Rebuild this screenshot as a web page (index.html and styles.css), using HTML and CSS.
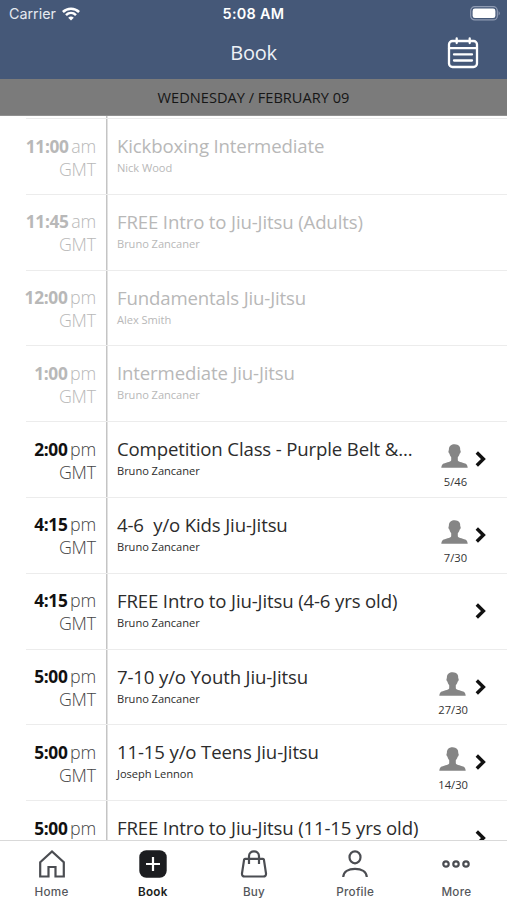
FILE: index.html
```html
<!DOCTYPE html>
<html lang="en">
<head>
<meta charset="utf-8">
<title>Book</title>
<link rel="stylesheet" href="styles.css">
</head>
<body>
<svg width="0" height="0" class="defs" aria-hidden="true">
  <symbol id="person" viewBox="0 0 27 24"><path d="M13.8 0.2C9.8 0 7.6 2.5 7.9 6.2C7 6.6 7.5 9 8.5 9.7C8.9 11.4 9.5 12.4 10.2 13.2V16.2C9.8 18 3.6 18.7 1.9 20C.8 20.9.4 22.4.3 23.7H26.7C26.6 22.4 26.2 20.9 25.1 20C23.4 18.7 17.2 18 16.8 16.2V13.2C17.6 12.4 18.2 11.4 18.6 9.7C19.8 9 20.1 6.6 19.2 6.2C19.6 2.7 17.7.4 13.8.2Z"/></symbol>
  <symbol id="chevron" viewBox="0 0 11 16"><path d="M1.8 1.5L8.4 8L1.8 14.5" fill="none" stroke="#111" stroke-width="3.4"/></symbol>
</svg>
<div class="app">
  <header class="header">
    <div class="status">
      <div class="carrier"><span>Carrier</span>
        <svg width="18" height="14" viewBox="0 0 18 14" fill="none" stroke="#fff" stroke-width="2.5"><path d="M.9 5C5.4.5 12.6.5 17.1 5"/><path d="M4 8.2C6.9 5.4 11.1 5.4 14 8.2"/><path d="M6.2 10.7Q9 8.2 11.8 10.7L9 13.6Z" fill="#fff" stroke="none"/></svg>
      </div>
      <div class="clock">5:08 AM</div>
      <svg class="battery" width="31" height="15" viewBox="0 0 31 15"><rect x=".7" y=".7" width="26.6" height="13.2" rx="4" fill="none" stroke="#8f9bb3" stroke-width="1.2"/><rect x="2.6" y="2.6" width="22.8" height="9.4" rx="2.3" fill="#fff"/><path d="M28.6 5Q31 7.3 28.6 9.6Z" fill="#8f9bb3"/></svg>
    </div>
    <div class="titlebar">
      <h1>Book</h1>
      <svg class="calendar" width="32" height="32" viewBox="0 0 32 32" fill="none" stroke="#fff" stroke-width="2.3" stroke-linecap="round"><rect x="2" y="4" width="28" height="26" rx="3.5"/><path d="M2 11.2H30M9.7 1.5V6M22.7 1.5V6M7 17.4H25M7 23.5H25"/></svg>
    </div>
  </header>
  <div class="date">WEDNESDAY / FEBRUARY 09</div>
  <main class="list">
    <article class="row past"><div class="time"><b>11:00</b> am<br>GMT</div><div class="info"><h2>Kickboxing Intermediate</h2><p>Nick Wood</p></div></article>
    <article class="row past"><div class="time"><b>11:45</b> am<br>GMT</div><div class="info"><h2>FREE Intro to Jiu-Jitsu (Adults)</h2><p>Bruno Zancaner</p></div></article>
    <article class="row past"><div class="time"><b>12:00</b> pm<br>GMT</div><div class="info"><h2>Fundamentals Jiu-Jitsu</h2><p>Alex Smith</p></div></article>
    <article class="row past"><div class="time"><b>1:00</b> pm<br>GMT</div><div class="info"><h2>Intermediate Jiu-Jitsu</h2><p>Bruno Zancaner</p></div></article>
    <article class="row"><div class="time"><b>2:00</b> pm<br>GMT</div><div class="info"><h2>Competition Class - Purple Belt &amp;...</h2><p>Bruno Zancaner</p></div><div class="spots"><svg width="27" height="24"><use href="#person"/></svg><span>5/46</span></div><svg class="chev" width="11" height="16"><use href="#chevron"/></svg></article>
    <article class="row"><div class="time"><b>4:15</b> pm<br>GMT</div><div class="info"><h2>4-6  y/o Kids Jiu-Jitsu</h2><p>Bruno Zancaner</p></div><div class="spots"><svg width="27" height="24"><use href="#person"/></svg><span>7/30</span></div><svg class="chev" width="11" height="16"><use href="#chevron"/></svg></article>
    <article class="row"><div class="time"><b>4:15</b> pm<br>GMT</div><div class="info"><h2>FREE Intro to Jiu-Jitsu (4-6 yrs old)</h2><p>Bruno Zancaner</p></div><svg class="chev" width="11" height="16"><use href="#chevron"/></svg></article>
    <article class="row"><div class="time"><b>5:00</b> pm<br>GMT</div><div class="info"><h2>7-10 y/o Youth Jiu-Jitsu</h2><p>Bruno Zancaner</p></div><div class="spots wide"><svg width="27" height="24"><use href="#person"/></svg><span>27/30</span></div><svg class="chev" width="11" height="16"><use href="#chevron"/></svg></article>
    <article class="row"><div class="time"><b>5:00</b> pm<br>GMT</div><div class="info"><h2>11-15 y/o Teens Jiu-Jitsu</h2><p>Joseph Lennon</p></div><div class="spots wide"><svg width="27" height="24"><use href="#person"/></svg><span>14/30</span></div><svg class="chev" width="11" height="16"><use href="#chevron"/></svg></article>
    <article class="row"><div class="time"><b>5:00</b> pm</div><div class="info"><h2>FREE Intro to Jiu-Jitsu (11-15 yrs old)</h2></div><svg class="chev" width="11" height="16"><use href="#chevron"/></svg></article>
  </main>
  <nav class="tabs">
    <a class="tab"><svg viewBox="0 0 28 28"><path d="M2.2 12.3L14 1.5L25.8 12.3V26.5H17.5V17H10.5V26.5H2.2Z"/></svg><span>Home</span></a>
    <a class="tab active"><svg viewBox="0 0 28 28"><rect x=".3" y=".3" width="27.4" height="27.4" rx="7" fill="#1c1d20" stroke="none"/><path d="M14 7V21M7 14H21" stroke="#fff"/></svg><span>Book</span></a>
    <a class="tab"><svg viewBox="0 0 28 28"><path d="M5 8.8H23Q23.7 8.8 23.9 9.6L26 23.3Q26.3 26.5 23.2 26.5H4.8Q1.7 26.5 2 23.3L4.1 9.6Q4.3 8.8 5 8.8ZM9 14V6.2C9 -.2 19 -.2 19 6.2V14"/></svg><span>Buy</span></a>
    <a class="tab"><svg viewBox="0 0 28 28"><ellipse cx="14" cy="7.3" rx="5.5" ry="6"/><path d="M2.2 27C2.5 21.5 7.5 18.8 14 18.8S25.5 21.5 25.8 27"/></svg><span>Profile</span></a>
    <a class="tab"><svg viewBox="0 0 28 28"><circle cx="4" cy="14" r="2.7"/><circle cx="14" cy="14" r="2.7"/><circle cx="24" cy="14" r="2.7"/></svg><span>More</span></a>
  </nav>
</div>
</body>
</html>
```
FILE: styles.css
```css
* { box-sizing: border-box; }
body { margin: 0; background: #fff; font-family: "Open Sans", "Noto Sans", sans-serif; color: #2c2c2c; }
h1, h2, p { margin: 0; font-weight: 400; }
svg { display: block; flex: none; }
.defs { position: absolute; }
.app { width: 507px; height: 900px; display: flex; flex-direction: column; overflow: hidden; }
.header { height: 79px; flex: none; background: #455878; color: #fff; }
.status { height: 27px; display: grid; grid-template-columns: 1fr auto 1fr; align-items: center; padding: 0 6px 0 9px; font-family: Inter, sans-serif; }
.carrier { display: flex; align-items: center; gap: 6px; font-size: 14.3px; color: #e6e9f0; }
.clock { font-size: 14.4px; font-weight: 600; letter-spacing: .3px; margin-right: 3px; }
.battery { justify-self: end; }
.titlebar { height: 52px; display: grid; grid-template-columns: 1fr auto 1fr; align-items: center; padding: 0 28px; }
.titlebar h1 { grid-column: 2; font-size: 20px; line-height: 52px; letter-spacing: -.3px; color: #eef1f6; }
.calendar { justify-self: end; }
.date { height: 37px; flex: none; background: #7b7b7b; border-bottom: 1px solid #909090; color: #161616; text-align: center; font-size: 14.6px; line-height: 37px; }
.list { flex: 1; min-height: 0; overflow: hidden; padding-top: 2px; background: linear-gradient(#c4c4c4, #c4c4c4) 106px 0 / 1.5px 100% no-repeat; }
.row { height: 75.8px; margin-left: 26px; padding-right: 21px; display: flex; border-top: 1.5px solid #ececec; }
.time { width: 74px; margin-left: -4px; margin-right: 21px; padding-top: 15.5px; text-align: right; white-space: nowrap; font-size: 17.8px; line-height: 23px; font-weight: 300; color: #444; flex: none; word-spacing: -2px; letter-spacing: -.15px; }
.time b { font-weight: 700; color: #111; font-size: 17.3px; letter-spacing: -.3px; }
.info { flex: 1; min-width: 0; padding-top: 13px; white-space: pre; }
.info h2 { font-size: 18.6px; line-height: 27px; letter-spacing: -.14px; }
.info p { font-size: 11.1px; line-height: 17px; letter-spacing: -.04px; }
.past .time, .past .time b, .past .info { color: #b8b8b8; }
.spots { display: flex; flex-direction: column; align-items: center; padding-top: 22px; margin-right: 7px; }
.spots svg { fill: #858585; }
.spots span { font-size: 11.2px; line-height: 16px; margin-top: 6px; margin-left: 2px; color: #333; }
.wide svg { margin-right: 2px; }
.wide span { margin-left: 0; }
.chev { margin-top: 29px; }
.tabs { height: 60px; flex: none; display: grid; grid-template-columns: repeat(5, 1fr); padding-left: 1px; border-top: 1px solid #d9d9d9; background: #fff; }
.tab { display: flex; flex-direction: column; align-items: center; padding-top: 9px; color: #55575b; font: 500 11.7px/16px Inter, sans-serif; letter-spacing: .25px; }
.tab svg { width: 28px; height: 28px; fill: none; stroke: #4b4d52; stroke-width: 2.2; }
.tab span { margin-top: 6px; }
.tab.active { color: #1c1d20; font-weight: 600; }
```
